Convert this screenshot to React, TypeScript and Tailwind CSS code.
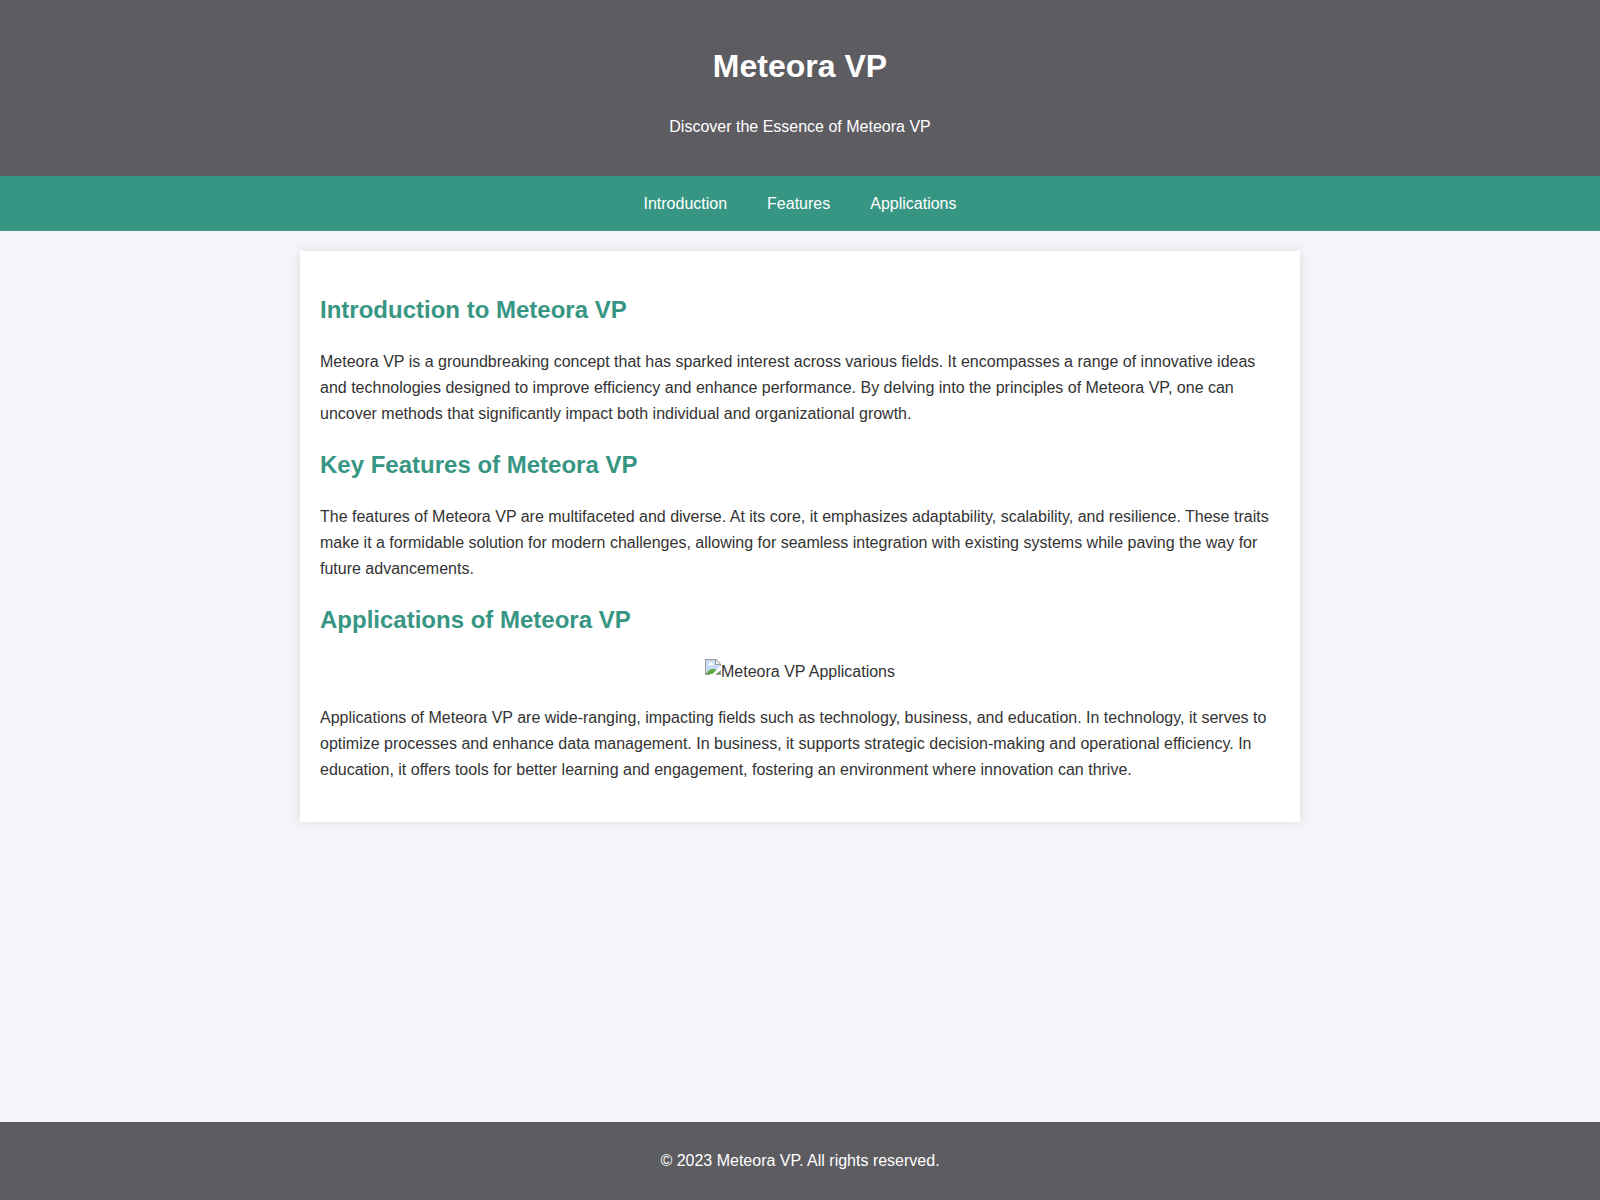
import React from 'react';

interface SectionProps {
  id: string;
  title: string;
  children: React.ReactNode;
}

const navLinks = [
  { href: '#introduction', label: 'Introduction' },
  { href: '#features', label: 'Features' },
  { href: '#applications', label: 'Applications' },
];

const Section: React.FC<SectionProps> = ({ id, title, children }) => (
  <section id={id}>
    <h2 className="mb-5 text-2xl leading-[38px] font-bold text-[#379683]">{title}</h2>
    {children}
  </section>
);

// Torn page icon shown in front of the image's alt text
const MissingImageIcon: React.FC = () => (
  <svg width="16" height="16" viewBox="0 0 16 16" aria-hidden="true">
    <path d="M1 1h10l4 4v10H1z" fill="#c6dcf5" />
    <path d="M0 0h11v1H1v14h4v1H0z" fill="#9b9b9b" />
    <path d="M10 0h1l5 5v3h-1V6h-5z" fill="#9b9b9b" />
    <path d="M11 1.5V5h3.5z" fill="#fff" />
    <path d="M3 6c0-1 .6-1.5 1.400-1.500C4.700 3.500 5.300 3 6 3s1.300.6 1.500 1.500C8.400 4.500 9 5.100 9 6z" fill="#fff" />
    <path d="M1 15c1.500-3 4-5 7-5 1.500 0 2.500.4 3.500 1L8 15z" fill="#5aa83f" />
    <path d="M16 6.500 6.500 16H10l6-5z" fill="#fff" />
    <path d="M10 16l6-5v5z" fill="#9b9b9b" />
    <path d="M12 15l3-2.500V15z" fill="#5aa83f" />
  </svg>
);

const App: React.FC = () => {
  return (
    <div className="flex min-h-screen flex-col bg-[#f4f4f9] font-['Liberation_Sans',Arial,sans-serif] text-base leading-[26px] text-[#333]">
      <header className="bg-[#5d5c61] px-5 pt-[41px] pb-9 text-center text-white">
        <h1 className="text-[32px] leading-[51px] font-bold">Meteora VP</h1>
        <p className="mt-[22px]">Discover the Essence of Meteora VP</p>
      </header>

      <nav className="flex justify-center gap-10 bg-[#379683] py-[15px] leading-[25px]">
        {navLinks.map((link) => (
          <a key={link.href} href={link.href} className="text-white">
            {link.label}
          </a>
        ))}
      </nav>

      <main className="mx-auto my-5 flex w-full max-w-[1000px] flex-col gap-[19px] bg-white px-5 pt-10 pb-[39px] shadow-[0_0_10px_rgba(0,0,0,0.1)]">
        <Section id="introduction" title="Introduction to Meteora VP">
          <p>
            Meteora VP is a groundbreaking concept that has sparked interest across various fields. It encompasses a
            range of innovative ideas and technologies designed to improve efficiency and enhance performance. By
            delving into the principles of Meteora VP, one can uncover methods that significantly impact both individual
            and organizational growth.
          </p>
        </Section>

        <Section id="features" title="Key Features of Meteora VP">
          <p>
            The features of Meteora VP are multifaceted and diverse. At its core, it emphasizes adaptability,
            scalability, and resilience. These traits make it a formidable solution for modern challenges, allowing for
            seamless integration with existing systems while paving the way for future advancements.
          </p>
        </Section>

        <Section id="applications" title="Applications of Meteora VP">
          <div className="mb-5 flex justify-center">
            <MissingImageIcon />
            <span>Meteora VP Applications</span>
          </div>
          <p>
            Applications of Meteora VP are wide-ranging, impacting fields such as technology, business, and education.
            In technology, it serves to optimize processes and enhance data management. In business, it supports
            strategic decision-making and operational efficiency. In education, it offers tools for better learning and
            engagement, fostering an environment where innovation can thrive.
          </p>
        </Section>
      </main>

      <footer className="mt-auto bg-[#5d5c61] px-5 py-[26px] text-center text-white">
        <p>© 2023 Meteora VP. All rights reserved.</p>
      </footer>
    </div>
  );
};

export default App;
